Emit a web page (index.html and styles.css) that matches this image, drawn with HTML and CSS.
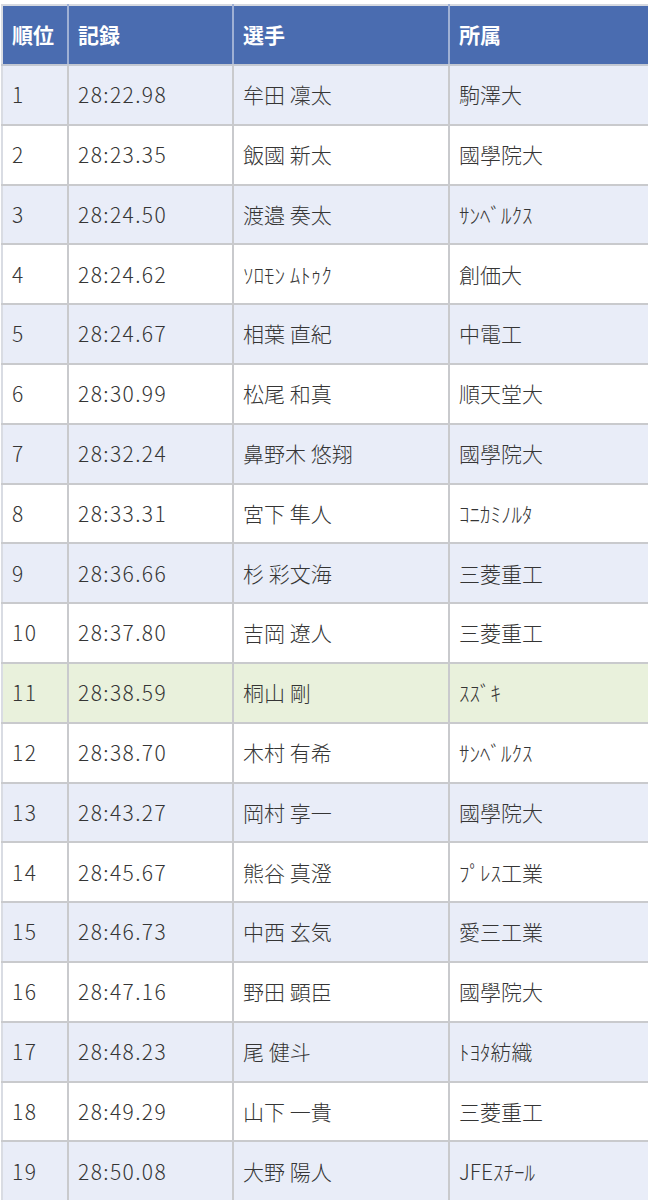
FILE: index.html
```html
<!DOCTYPE html>
<html lang="ja">
<head>
<meta charset="utf-8">
<link rel="stylesheet" href="styles.css">
</head>
<body>
<div class="wrap">
<table class="results">
<colgroup><col class="c-rank"><col class="c-time"><col class="c-name"><col class="c-team"></colgroup>
<thead>
<tr><th>順位</th><th>記録</th><th>選手</th><th>所属</th></tr>
</thead>
<tbody>
<tr><td class="num">1</td><td class="num">28:22.98</td><td>牟田 凜太</td><td>駒澤大</td></tr>
<tr><td class="num">2</td><td class="num">28:23.35</td><td>飯國 新太</td><td>國學院大</td></tr>
<tr><td class="num">3</td><td class="num">28:24.50</td><td>渡邉 奏太</td><td>ｻﾝﾍﾞﾙｸｽ</td></tr>
<tr><td class="num">4</td><td class="num">28:24.62</td><td>ｿﾛﾓﾝ ﾑﾄｩｸ</td><td>創価大</td></tr>
<tr><td class="num">5</td><td class="num">28:24.67</td><td>相葉 直紀</td><td>中電工</td></tr>
<tr><td class="num">6</td><td class="num">28:30.99</td><td>松尾 和真</td><td>順天堂大</td></tr>
<tr><td class="num">7</td><td class="num">28:32.24</td><td>鼻野木 悠翔</td><td>國學院大</td></tr>
<tr><td class="num">8</td><td class="num">28:33.31</td><td>宮下 隼人</td><td>ｺﾆｶﾐﾉﾙﾀ</td></tr>
<tr><td class="num">9</td><td class="num">28:36.66</td><td>杉 彩文海</td><td>三菱重工</td></tr>
<tr><td class="num">10</td><td class="num">28:37.80</td><td>吉岡 遼人</td><td>三菱重工</td></tr>
<tr class="hl"><td class="num">11</td><td class="num">28:38.59</td><td>桐山 剛</td><td>ｽｽﾞｷ</td></tr>
<tr><td class="num">12</td><td class="num">28:38.70</td><td>木村 有希</td><td>ｻﾝﾍﾞﾙｸｽ</td></tr>
<tr><td class="num">13</td><td class="num">28:43.27</td><td>岡村 享一</td><td>國學院大</td></tr>
<tr><td class="num">14</td><td class="num">28:45.67</td><td>熊谷 真澄</td><td>ﾌﾟﾚｽ工業</td></tr>
<tr><td class="num">15</td><td class="num">28:46.73</td><td>中西 玄気</td><td>愛三工業</td></tr>
<tr><td class="num">16</td><td class="num">28:47.16</td><td>野田 顕臣</td><td>國學院大</td></tr>
<tr><td class="num">17</td><td class="num">28:48.23</td><td>尾 健斗</td><td>ﾄﾖﾀ紡織</td></tr>
<tr><td class="num">18</td><td class="num">28:49.29</td><td>山下 一貴</td><td>三菱重工</td></tr>
<tr><td class="num">19</td><td class="num">28:50.08</td><td>大野 陽人</td><td>JFEｽﾁｰﾙ</td></tr>
</tbody>
</table>
</div>
</body>
</html>
```
FILE: styles.css
```css
html, body {
  margin: 0;
  padding: 0;
  background: #ffffff;
}
.wrap {
  width: 648px;
  overflow: hidden;
  padding-top: 4px;
}
.results {
  border-collapse: collapse;
  table-layout: fixed;
  width: 662px;
  margin-left: 1px;
  font-family: "Noto Sans CJK JP", "Noto Sans", sans-serif;
  font-size: 21px;
  color: #353535;
  border-top: 1px solid #d6d9e0;
}
.c-rank { width: 66px; }
.c-time { width: 165px; }
.c-name { width: 216px; }
.c-team { width: 215px; }
.results th,
.results td {
  border: 2px solid #c9cacd;
  padding: 0 0 0 9px;
  text-align: left;
  vertical-align: middle;
  white-space: nowrap;
  line-height: 1.2;
}
.results th {
  background: #4a6cb0;
  color: #ffffff;
  font-weight: 700;
  height: 58px;
  border-color: #9fb0d4;
  border-bottom-color: #c3c8d2;
  border-top-color: #d6d9e0;
}
.results td {
  height: 57.8px;
  font-weight: 300;
}
.results td.num {
  letter-spacing: 1.4px;
}
.results tbody tr:nth-child(odd) td {
  background: #e9edf8;
}
.results tbody tr:nth-child(even) td {
  background: #ffffff;
}
.results tbody tr.hl td {
  background: #e9f1dc;
}
.results td:first-child,
.results th:first-child {
  border-left-color: #d9dce3;
}
```
